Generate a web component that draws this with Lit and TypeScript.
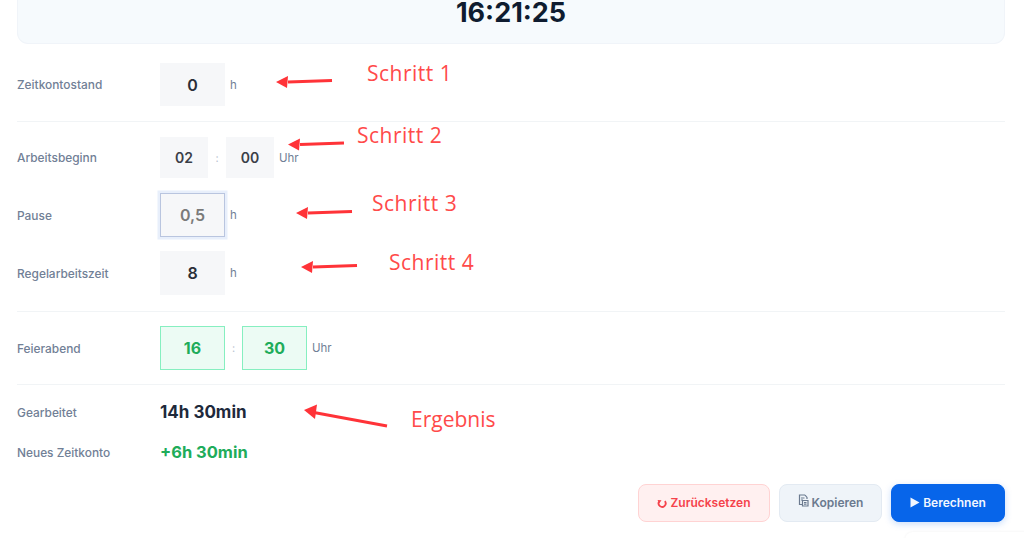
import { LitElement, html, css } from "lit";
import { customElement } from "lit/decorators.js";

const arrows = [
  { x: 276, y: 73, w: 57, h: 18, d: "M56 7.5 L12 9", hx: 0, hy: 9 },
  { x: 288, y: 136, w: 57, h: 18, d: "M56 7 L12 8.5", hx: 0, hy: 8.5 },
  { x: 296, y: 204, w: 57, h: 18, d: "M56 7.5 L12 9", hx: 0, hy: 9 },
  { x: 301, y: 258, w: 57, h: 18, d: "M56 7.5 L12 9", hx: 0, hy: 9 },
];

@customElement("app-root")
export class AppRoot extends LitElement {
  static styles = css`
    :host { display: block; width: 1024px; height: 538px; overflow: hidden; position: relative; background: #fff;
      font-family: Inter, "Liberation Sans", sans-serif; color: #1e293b; }
    .page { padding: 0 19px 0 17px; display: flex; flex-direction: column; }
    .clock { height: 44px; box-sizing: border-box; background: #f6fafd; border: 1px solid #f0f4f9; border-top: 0;
      border-radius: 0 0 11px 11px; display: flex; justify-content: center; font-size: 27px; font-weight: 700;
      line-height: 24px; color: #0f1c30; padding-top: 1px; }
    .row { display: flex; align-items: center; }
    .label { width: 143px; font-size: 11.9px; font-weight: 500; color: #718096; flex: none; }
    .box { box-sizing: border-box; background: #f6f7f9; display: flex; align-items: center; justify-content: center;
      font-size: 16px; font-weight: 600; color: #2a2f38; width: 65px; height: 44px; }
    .small { width: 48px; height: 41px; font-size: 14px; color: #3a3f48; }
    .focus { border: 1.5px solid #b9c5df; box-shadow: 0 0 0 2.5px #e8effb; color: #7a7a7a; }
    .green { background: #ecfbf4; border: 1px solid #86efc0; color: #20ac5a; font-weight: 700; }
    .unit { font-size: 11.5px; color: #718096; margin-left: 5px; }
    .colon { width: 18px; text-align: center; font-size: 11px; color: #b8c2d0; }
    .colon.tight { width: 17px; }
    .rule { height: 1px; background: #f1f4f6; }
    .r1 { margin-top: 19px; margin-bottom: 15px; }
    .r1 .box { height: 43px; }
    .r2 { margin-top: 15px; }
    .r3 { margin-top: 15px; }
    .r4 { margin-top: 14px; margin-bottom: 16px; }
    .r5 { margin-top: 14px; margin-bottom: 14px; }
    .result { height: 24px; }
    .r6 { margin-top: 15px; }
    .r7 { margin-top: 16px; }
    .r6 .label, .r7 .label { padding-top: 1px; }
    .value { font-size: 17px; font-weight: 700; color: #1e293b; }
    .value.pos { color: #20ac5a; font-size: 16.5px; }
    .actions { margin-top: 20px; display: flex; justify-content: flex-end; gap: 9px; }
    .btn { box-sizing: border-box; height: 38px; border-radius: 8px; display: flex; align-items: center; justify-content: center;
      gap: 3px; font: 600 12px Inter, "Liberation Sans", sans-serif; padding: 0 0 1px; }
    .reset { width: 132px; background: #fff0f0; border: 1px solid #ffd3d3; color: #f5424b; }
    .copy { width: 103px; background: #eff4f9; border: 1px solid #e3eaf2; color: #6b7a8f; }
    .calc { width: 114px; background: #0765ea; border: 1px solid #0765ea; color: #f2f7ff; box-shadow: 0 2px 7px rgba(7,101,234,.22); }
    .note { position: absolute; font: 400 21px "Open Sans", "Liberation Sans", sans-serif; color: #ff4a4a; line-height: 24px; white-space: nowrap; }
    .step { letter-spacing: .5px; }
    .arrow { position: absolute; overflow: visible; }
    .corner { position: absolute; left: 905px; top: 532px; width: 130px; height: 20px; background: #fff; border-radius: 8px 0 0 0; box-shadow: 0 0 3px rgba(0,0,0,.06); }
  `;

  render() {
    return html`
      <div class="page">
        <div class="clock">16:21:25</div>
        <div class="row r1"><div class="label">Zeitkontostand</div><div class="box">0</div><span class="unit">h</span></div>
        <div class="rule"></div>
        <div class="row r2"><div class="label">Arbeitsbeginn</div><div class="box small">02</div><span class="colon">:</span><div class="box small">00</div><span class="unit">Uhr</span></div>
        <div class="row r3"><div class="label">Pause</div><div class="box focus">0,5</div><span class="unit">h</span></div>
        <div class="row r4"><div class="label">Regelarbeitszeit</div><div class="box">8</div><span class="unit">h</span></div>
        <div class="rule"></div>
        <div class="row r5"><div class="label">Feierabend</div><div class="box green">16</div><span class="colon tight">:</span><div class="box green">30</div><span class="unit">Uhr</span></div>
        <div class="rule"></div>
        <div class="row result r6"><div class="label">Gearbeitet</div><div class="value">14h 30min</div></div>
        <div class="row result r7"><div class="label">Neues Zeitkonto</div><div class="value pos">+6h 30min</div></div>
        <div class="actions">
          <button class="btn reset">
            <svg width="10" height="10" viewBox="0 0 12 12" fill="none" stroke="currentColor" stroke-width="2.2"><path d="M2.6 4.2 A4.2 4.2 0 1 0 9.4 3.8"/><path d="M0.6 2.4 L5.4 2.6 L2.8 6.4 Z" fill="currentColor" stroke="none"/></svg>
            Zurücksetzen</button>
          <button class="btn copy">
            <svg style="margin-top:-4px" width="11" height="13" viewBox="0 0 11 13" fill="none" stroke="currentColor" stroke-width="1.2"><path d="M7 1H1.5V10.5H4"/><path d="M7 1L9 3.5V5"/><path d="M3 4h3.5M3 6h2"/><path d="M4.5 6.5H10V12H4.5Z"/><path d="M6 8.5h2.5M6 10.2h2.5"/></svg>
            Kopieren</button>
          <button class="btn calc">
            <svg width="10" height="11" viewBox="0 0 10 11"><path d="M0.5 0.5 L9.5 5.5 L0.5 10.5 Z" fill="currentColor"/></svg>
            Berechnen</button>
        </div>
      </div>
      ${arrows.map(a => html`<svg class="arrow" style="left:${a.x}px;top:${a.y}px" width=${a.w} height=${a.h} viewBox="0 0 ${a.w} ${a.h}">
        <path d=${a.d} stroke="#ff3338" stroke-width="3" fill="none"/><path d="M0 ${a.hy} L12 ${a.hy-6} L11 ${a.hy+6} Z" fill="#ff3338"/></svg>`)}
      <svg class="arrow" style="left:304px;top:404px" width="84" height="24" viewBox="0 0 84 24">
        <path d="M83 22 L10 8.5" stroke="#ff3338" stroke-width="3" fill="none"/><path d="M0 6 L13 0.5 L11 15 Z" fill="#ff3338"/></svg>
      <div class="note step" style="left:367px;top:61px">Schritt 1</div>
      <div class="note step" style="left:357px;top:123px">Schritt 2</div>
      <div class="note step" style="left:372px;top:191px">Schritt 3</div>
      <div class="note step" style="left:389px;top:250px">Schritt 4</div>
      <div class="note" style="left:411px;top:407px">Ergebnis</div>
      <div class="corner"></div>
    `;
  }
}
